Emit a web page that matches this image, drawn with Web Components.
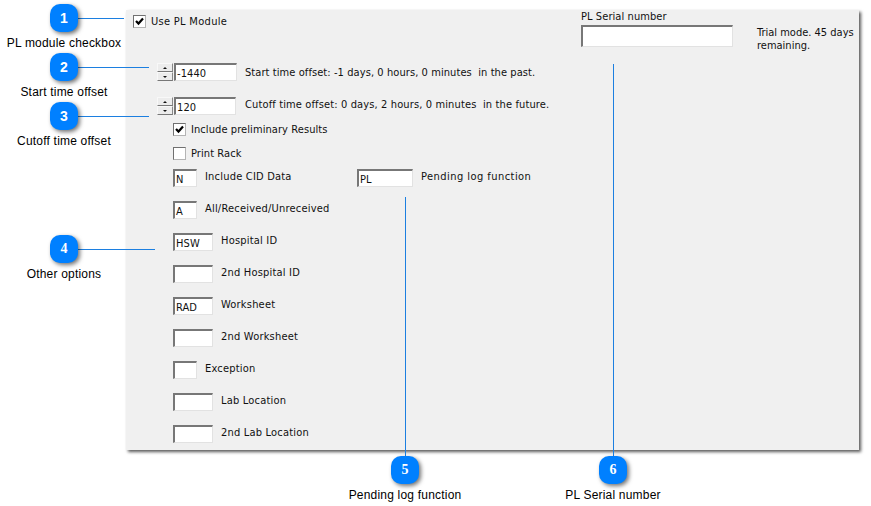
<!DOCTYPE html>
<html>
<head>
<meta charset="utf-8">
<title>PL Module</title>
<style>
  html, body { margin: 0; background: #fff; }
</style>
</head>
<body>
<help-page>
  <pl-panel>
    <pl-check slot="top" checked style="height:48px;letter-spacing:.3px">Use PL Module</pl-check>
    <pl-spin slot="spin" value="-1440" width="63" gap="8" drop="3" style="height:34px">Start time offset: -1 days, 0 hours, 0 minutes  in the past.</pl-spin>
    <pl-spin slot="spin" value="120" width="62" gap="9" drop="1" style="height:26px;letter-spacing:.13px">Cutoff time offset: 0 days, 2 hours, 0 minutes  in the future.</pl-spin>
    <pl-check checked style="height:24px">Include preliminary Results</pl-check>
    <pl-check style="height:22px">Print Rack</pl-check>
    <pl-row>
      <pl-field value="N" width="24" style="width:184px">Include CID Data</pl-field>
      <pl-field value="PL" width="56" style="letter-spacing:.45px">Pending log function</pl-field>
    </pl-row>
    <pl-field value="A" width="24">All/Received/Unreceived</pl-field>
    <pl-field value="HSW" width="40">Hospital ID</pl-field>
    <pl-field width="40">2nd Hospital ID</pl-field>
    <pl-field value="RAD" width="40">Worksheet</pl-field>
    <pl-field width="40">2nd Worksheet</pl-field>
    <pl-field width="24">Exception</pl-field>
    <pl-field width="40">Lab Location</pl-field>
    <pl-field width="40">2nd Lab Location</pl-field>
    <pl-serial slot="serial"></pl-serial>
  </pl-panel>

  <help-callout n="1" x="64" y="18" dir="right" len="46" label="PL module checkbox" ly="43"></help-callout>
  <help-callout n="2" x="64" y="67" dir="right" len="71" label="Start time offset" ly="92"></help-callout>
  <help-callout n="3" x="64" y="116" dir="right" len="71" label="Cutoff time offset" ly="141"></help-callout>
  <help-callout n="4" serif x="64" y="249" dir="right" len="77" label="Other options" ly="274"></help-callout>
  <help-callout n="5" serif x="405" y="470" dir="up" len="273" label="Pending log function" ly="495"></help-callout>
  <help-callout n="6" serif x="613" y="470" dir="up" len="406" label="PL Serial number" ly="495"></help-callout>
</help-page>

<script>
const uiFont = `font: 11px/13px Tahoma, "DejaVu Sans Condensed", "Noto Sans", sans-serif; letter-spacing: .08px; color: #111;`;
const sunken = `
  box-sizing: border-box;
  background: #fff;
  border: 1px solid #e2e2e2;
  border-top: 2px solid #777;
  border-left: 2px solid #777;
`;

class HelpPage extends HTMLElement {
  connectedCallback() {
    if (this.shadowRoot) return;
    const root = this.attachShadow({ mode: 'open' });
    root.innerHTML = `
      <style>
        :host {
          display: block;
          position: relative;
          width: 871px;
          height: 506px;
          overflow: hidden;
          padding: 10px 0 0 126px;
          box-sizing: border-box;
        }
      </style>
      <slot></slot>
    `;
  }
}

class PlPanel extends HTMLElement {
  connectedCallback() {
    if (this.shadowRoot) return;
    const root = this.attachShadow({ mode: 'open' });
    root.innerHTML = `
      <style>
        :host {
          display: flex;
          box-sizing: border-box;
          width: 733px;
          height: 440px;
          background: #f0f0f0;
          box-shadow: 2px 2px 3px rgba(0,0,0,.65);
          ${uiFont}
        }
        .main { width: 455px; display: flex; flex-direction: column; padding: 5px 0 0 47px; box-sizing: border-box; }
        .top { margin-left: -40px; display: flex; flex-direction: column; }
        .spins { margin-left: -16px; }
      </style>
      <div class="main">
        <div class="top"><slot name="top"></slot></div>
        <div class="spins"><slot name="spin"></slot></div>
        <slot></slot>
      </div>
      <slot name="serial"></slot>
    `;
  }
}

class PlCheck extends HTMLElement {
  connectedCallback() {
    if (this.shadowRoot) return;
    const root = this.attachShadow({ mode: 'open' });
    const on = this.hasAttribute('checked');
    root.innerHTML = `
      <style>
        :host { display: flex; flex: none; align-items: flex-start; gap: 5px; }
        .box { width: 13px; height: 13px; box-sizing: border-box; background: #fff; border: 1px solid #8c8c8c; border-color: #707070 #b4b4b4 #b4b4b4 #707070; flex: none; }
        svg { display: block; }
      </style>
      <div class="box">${on ? '<svg width="11" height="11" viewBox="0 0 11 11"><path d="M2 5 L4.5 7.6 L9 2.6" fill="none" stroke="#000" stroke-width="2.2"/></svg>' : ''}</div>
      <span><slot></slot></span>
    `;
  }
}

class PlSpin extends HTMLElement {
  connectedCallback() {
    if (this.shadowRoot) return;
    const root = this.attachShadow({ mode: 'open' });
    const w = this.getAttribute('width');
    root.innerHTML = `
      <style>
        :host { display: flex; align-items: flex-start; }
        .btns { width: 16px; height: 18px; margin-right: 1px; display: flex; flex-direction: column; flex: none; }
        .btns i { flex: 1; background: #ececec; border: 1px solid #f8f8f8; border-bottom-color: #777; border-right-color: #888; box-sizing: border-box; display: grid; place-items: center; }
        .btns b { display: block; width: 0; height: 0; border: 2px solid transparent; }
        .up { border-bottom-color: #111 !important; border-top-width: 0 !important; }
        .down { border-top-color: #111 !important; border-bottom-width: 0 !important; }
        .val { ${sunken} height: 18px; width: ${w}px; padding: 2px 0 0 1px; flex: none; }
        span { margin-left: ${this.getAttribute('gap')}px; margin-top: ${this.getAttribute('drop')}px; white-space: pre; }
      </style>
      <div class="btns"><i><b class="up"></b></i><i><b class="down"></b></i></div>
      <div class="val">${this.getAttribute('value')}</div>
      <span><slot></slot></span>
    `;
  }
}

class PlRow extends HTMLElement {
  connectedCallback() {
    if (this.shadowRoot) return;
    const root = this.attachShadow({ mode: 'open' });
    root.innerHTML = `<style>:host { display: flex; flex: none; }</style><slot></slot>`;
  }
}

class PlField extends HTMLElement {
  connectedCallback() {
    if (this.shadowRoot) return;
    const root = this.attachShadow({ mode: 'open' });
    const w = this.getAttribute('width');
    root.innerHTML = `
      <style>
        :host { display: flex; flex: none; height: 32px; align-items: flex-start; gap: 8px; letter-spacing: .2px; }
        .val { ${sunken} width: ${w}px; height: 18px; padding: 2px 0 0 1px; flex: none; letter-spacing: .08px; }
        span { white-space: pre; margin-top: 1px; }
      </style>
      <div class="val">${this.getAttribute('value') || ''}</div>
      <span><slot></slot></span>
    `;
  }
}

class PlSerial extends HTMLElement {
  connectedCallback() {
    if (this.shadowRoot) return;
    const root = this.attachShadow({ mode: 'open' });
    root.innerHTML = `
      <style>
        :host { display: grid; grid-template-columns: 152px 100px; column-gap: 24px; align-content: start; }
        .cap { grid-column: 1 / 3; height: 15px; }
        .val { ${sunken} height: 22px; }
        .note { margin-top: 1px; letter-spacing: 0; }
      </style>
      <div class="cap">PL Serial number</div>
      <div class="val"></div>
      <div class="note">Trial mode. 45 days remaining.</div>
    `;
  }
}

class HelpCallout extends HTMLElement {
  connectedCallback() {
    if (this.shadowRoot) return;
    const root = this.attachShadow({ mode: 'open' });
    const x = +this.getAttribute('x'), y = +this.getAttribute('y');
    const len = +this.getAttribute('len');
    const up = this.getAttribute('dir') === 'up';
    const numFont = this.hasAttribute('serif') ? '"Liberation Serif", serif' : '"Liberation Sans", sans-serif';
    const line = up
      ? `left:${x}px; top:${y - len}px; width:1px; height:${len - 12}px;`
      : `left:${x + 14}px; top:${y}px; width:${len}px; height:1px;`;
    root.innerHTML = `
      <style>
        :host { display: contents; }
        .line { position: absolute; background: #1c7fe0; }
        .badge {
          position: absolute; width: 28px; height: 28px;
          left: ${x - 14}px; top: ${y - 14}px;
          border-radius: 10px; background: #0080ff;
          box-shadow: 2px 2px 4px rgba(0,0,0,.55);
          color: #fff; font: bold 14px/28px ${numFont}; text-align: center;
        }
        .label {
          position: absolute; left: ${x - 80}px; width: 160px; top: ${+this.getAttribute('ly') - 7}px;
          font: 12px/14px "Liberation Sans", Arial, sans-serif; letter-spacing: .2px; color: #000; text-align: center;
        }
      </style>
      <div class="line" style="${line}"></div>
      <div class="badge">${this.getAttribute('n')}</div>
      <div class="label">${this.getAttribute('label')}</div>
    `;
  }
}

customElements.define('help-page', HelpPage);
customElements.define('pl-panel', PlPanel);
customElements.define('pl-check', PlCheck);
customElements.define('pl-spin', PlSpin);
customElements.define('pl-row', PlRow);
customElements.define('pl-field', PlField);
customElements.define('pl-serial', PlSerial);
customElements.define('help-callout', HelpCallout);
</script>
</body>
</html>
